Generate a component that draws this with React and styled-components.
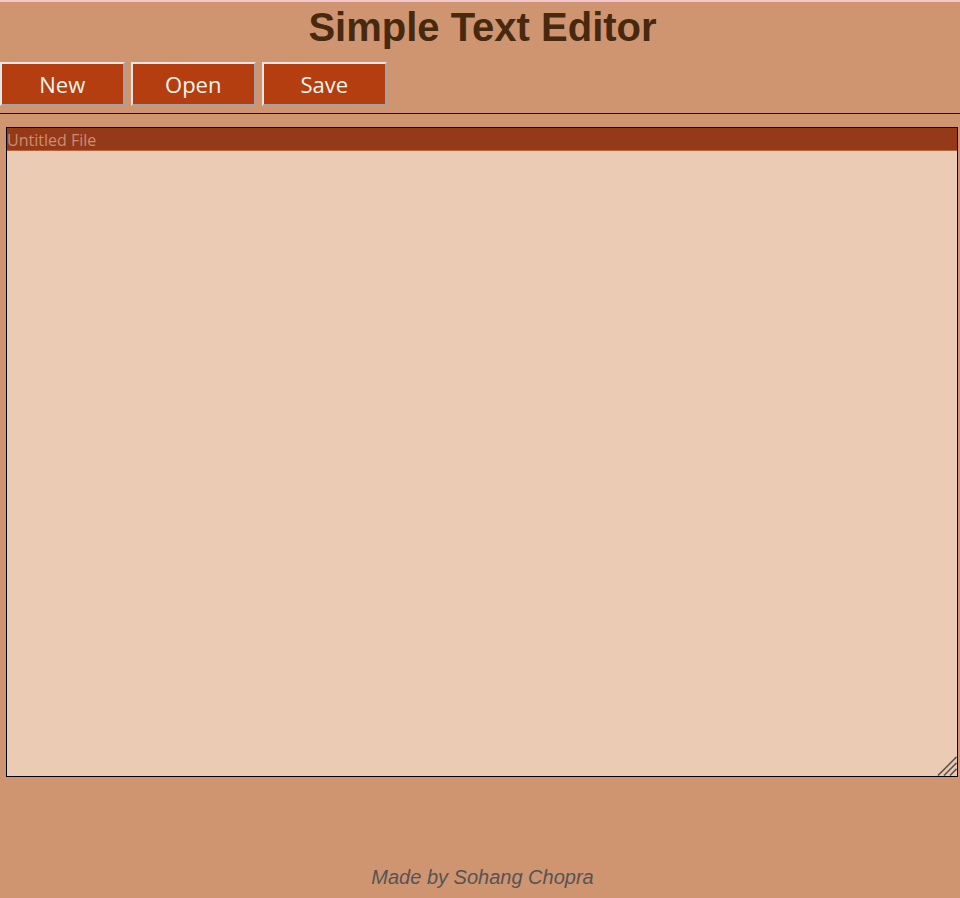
import React from "react";
import styled, { createGlobalStyle } from "styled-components";

const Global = createGlobalStyle`
  html, body {
    margin: 0;
    padding: 0;
    background: #cf9570;
  }
  body {
    border-top: 2px solid #f1c6cf;
    min-height: 896px;
    font-family: "Liberation Sans", Arial, sans-serif;
  }
`;

const Page = styled.div`
  display: flex;
  flex-direction: column;
`;

const Title = styled.h1`
  margin: 0;
  padding-left: 5px;
  height: 50px;
  line-height: 50px;
  text-align: center;
  font-family: "Liberation Sans", Arial, sans-serif;
  font-weight: 700;
  font-size: 40px;
  color: #472910;
`;

const Toolbar = styled.div`
  display: flex;
  gap: 6.5px;
  margin-top: 10px;
`;

const Button = styled.button`
  width: 124.5px;
  height: 44px;
  box-sizing: border-box;
  background: #b53e10;
  color: #fff6ec;
  font-family: "Open Sans", sans-serif;
  font-size: 22px;
  border-style: solid;
  border-width: 2px;
  border-color: #e6e6e6 #a3a3a3 #a3a3a3 #e6e6e6;
  padding: 0;
  cursor: pointer;
`;

const Divider = styled.div`
  margin-top: 7px;
  height: 1px;
  background: #1a1008;
`;

const Editor = styled.div`
  position: relative;
  margin: 13px 2px 0 6px;
  height: 650px;
  box-sizing: border-box;
  border: 1px solid #000;
  display: flex;
  flex-direction: column;
`;

const FileBar = styled.div`
  height: 22px;
  background: #943a19;
  color: #cf8c70;
  font-family: "Open Sans", sans-serif;
  font-size: 16px;
  line-height: 24px;
  border-bottom: 1px solid #b4653f;
  white-space: nowrap;
`;

const Area = styled.textarea`
  flex: 1;
  width: 100%;
  box-sizing: border-box;
  border: none;
  margin: 0;
  padding: 2px;
  background: #eccbb4;
  resize: none;
  outline: none;
  font-family: "Open Sans", sans-serif;
  font-size: 16px;
  display: block;
`;

const Grip = styled.svg`
  position: absolute;
  right: 0;
  bottom: 0;
  width: 20px;
  height: 20px;
  pointer-events: none;
`;

const Footer = styled.div`
  margin-top: 89px;
  padding-left: 5px;
  text-align: center;
  font-family: "Liberation Sans", Arial, sans-serif;
  font-style: italic;
  font-size: 20px;
  line-height: 23px;
  color: #545454;
`;

export default function App() {
  return (
    <Page>
      <Global />
      <Title>Simple Text Editor</Title>
      <Toolbar>
        <Button>New</Button>
        <Button>Open</Button>
        <Button>Save</Button>
      </Toolbar>
      <Divider />
      <Editor>
        <FileBar>Untitled File</FileBar>
        <Area spellCheck={false} />
        <Grip viewBox="0 0 20 20">
          <g stroke="#5e5650" strokeWidth="1.6" strokeLinecap="square">
            <line x1="19" y1="1.5" x2="1.5" y2="19" />
            <line x1="19" y1="7.5" x2="7.5" y2="19" />
            <line x1="19" y1="13.5" x2="13.5" y2="19" />
          </g>
        </Grip>
      </Editor>
      <Footer>Made by Sohang Chopra</Footer>
    </Page>
  );
}
